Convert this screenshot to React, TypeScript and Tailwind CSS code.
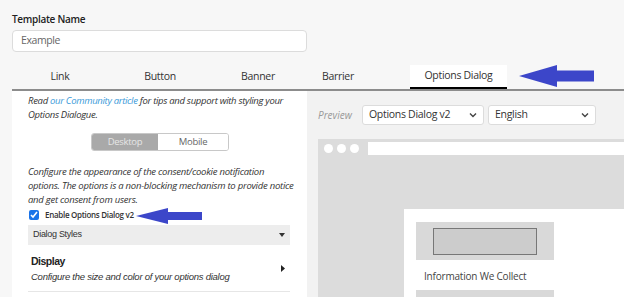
import React from "react";

const OS = { fontFamily: '"Open Sans", "Liberation Sans", sans-serif' };
const AR = { fontFamily: '"Liberation Sans", Arial, sans-serif' };

function Chevron() {
  return (
    <svg width="8" height="6" viewBox="0 0 8 6" className="shrink-0">
      <path d="M1 1.5 L4 4.5 L7 1.5" fill="none" stroke="#444" strokeWidth="1.4" />
    </svg>
  );
}

export default function App() {
  return (
    <div className="w-[624px] h-[297px] overflow-hidden bg-[#f7f7f7] flex flex-col text-[#333]" style={OS}>
      <div className="pl-[12px] pt-[12px]">
        <div className="text-[10px] font-semibold leading-[14px] tracking-[-0.3px] text-[#222]">Template Name</div>
        <div className="mt-[4px] w-[295px] h-[22px] bg-white border border-[#dcdcdc] rounded-[4px] flex items-center pl-[8px] text-[10.5px] tracking-[-0.4px] text-[#666]">
          Example
        </div>
      </div>

      <div className="ml-[12px] mt-[13px] h-[26px] flex items-end border-b-2 border-[#8c8c8c] text-[10.5px] tracking-[-0.3px] text-[#333]">
        <div className="w-[96px] h-[24px] flex items-center justify-center">Link</div>
        <div className="w-[104px] h-[24px] flex items-center justify-center">Button</div>
        <div className="w-[92px] h-[24px] flex items-center justify-center">Banner</div>
        <div className="w-[68px] h-[24px] flex items-center justify-center">Barrier</div>
        <div className="ml-[38px] w-[97px] h-[24px] flex items-center justify-center bg-white border-b-2 border-black">Options Dialog</div>
        <svg width="80" height="24" viewBox="0 0 80 24" className="ml-[10px] mb-[1px]">
          <polygon points="2,12 40,1 40,6.5 77,6.5 77,17.5 40,17.5 40,23" fill="#3c46c9" />
        </svg>
      </div>

      <div className="flex flex-1 min-h-0">
        <div className="ml-[12px] w-[295px] bg-white pl-[16px] pr-[17px] flex flex-col">
          <p className="mt-[3px] mr-[-14px] whitespace-nowrap text-[9.5px] italic leading-[14px] tracking-[-0.3px] text-[#333]">
            Read <span className="text-[#3a9ad9]">our Community article</span> for tips and support with styling your
            <br />
            Options Dialogue.
          </p>
          <div className="mt-[11px] ml-[63px] w-[138px] h-[18px] flex border border-[#c8c8c8] rounded-[3px] overflow-hidden text-[9.5px] tracking-[-0.3px]">
            <div className="w-[66px] bg-[#a9a9a9] text-[#e6e6e6] flex items-center justify-center">Desktop</div>
            <div className="flex-1 bg-white text-[#666] flex items-center justify-center">Mobile</div>
          </div>
          <p className="mt-[14px] mr-[-14px] whitespace-nowrap text-[9.5px] italic leading-[14px] tracking-[-0.25px] text-[#333]">
            Configure the appearance of the consent/cookie notification
            <br />
            options. The options is a non-blocking mechanism to provide notice
            <br />
            and get consent from users.
          </p>
          <div className="h-[16px] flex items-center">
            <input type="checkbox" defaultChecked className="w-[10px] h-[10px] m-0 ml-[1px] accent-[#1a73e8]" />
            <span className="ml-[6px] text-[8px] font-semibold tracking-[-0.3px] text-[#333]">Enable Options Dialog v2</span>
            <svg width="68" height="18" viewBox="0 0 68 18" className="ml-[1px] mt-[1px]">
              <polygon points="1,9 33,1 33,5 67,5 67,13 33,13 33,17" fill="#3c46c9" />
            </svg>
          </div>
          <div className="mt-[2px] h-[20px] bg-[#ededed] flex items-center justify-between pl-[5px] pr-[5px] text-[9px] tracking-[-0.3px] text-[#333]" style={AR}>
            <span>Dialog Styles</span>
            <svg width="6" height="4" viewBox="0 0 6 4"><polygon points="0,0 6,0 3,4" fill="#333" /></svg>
          </div>
          <div className="h-[47px] border-b border-[#e6e6e6] flex items-center justify-between pl-[3px] pr-[5px]" style={AR}>
            <div className="flex flex-col">
              <span className="text-[10.5px] font-bold leading-[16px] tracking-[-0.5px] text-[#222]">Display</span>
              <span className="text-[9.5px] italic leading-[15px] tracking-[-0.25px] text-[#333]">Configure the size and color of your options dialog</span>
            </div>
            <svg width="4" height="7" viewBox="0 0 4 7"><polygon points="0,0 4,3.5 0,7" fill="#222" /></svg>
          </div>
        </div>

        <div className="flex-1 bg-[#f2f2f2] pl-[11px] flex flex-col min-w-0">
          <div className="mt-[14px] h-[20px] flex items-center">
            <span className="text-[10px] italic text-[#999] w-[44px]">Preview</span>
            <div className="w-[122px] h-[20px] bg-white border border-[#dcdcdc] rounded-[3px] flex items-center justify-between pl-[6px] pr-[6px] text-[10.5px] tracking-[-0.3px] text-[#333]">
              <span>Options Dialog v2</span>
              <Chevron />
            </div>
            <div className="ml-[4px] w-[108px] h-[20px] bg-white border border-[#dcdcdc] rounded-[3px] flex items-center justify-between pl-[6px] pr-[6px] text-[10.5px] tracking-[-0.3px] text-[#333]">
              <span>English</span>
              <Chevron />
            </div>
          </div>
          <div className="mt-[14px] flex-1 bg-[#dcdcdc] flex flex-col overflow-hidden">
            <div className="mt-[3px] h-[13px] flex items-center pl-[6px]">
              <div className="w-[9px] h-[9px] rounded-full bg-white" />
              <div className="ml-[4px] w-[9px] h-[9px] rounded-full bg-white" />
              <div className="ml-[4px] w-[9px] h-[9px] rounded-full bg-white" />
              <div className="ml-[9px] flex-1 h-[13px] bg-white" />
            </div>
            <div className="mt-[54px] ml-[86px] flex-1 bg-white pl-[12px] pt-[13px] flex flex-col">
              <div className="w-[138px] h-[38px] bg-[#d9d9d9] flex items-center pl-[17px]">
                <div className="w-[104px] h-[27px] bg-[#cccccc] border border-[#777]" />
              </div>
              <div className="h-[30px] pt-[2px] flex items-center pl-[8px] text-[10px] tracking-[-0.2px] text-[#444]">Information We Collect</div>
              <div className="w-[138px] flex-1 bg-[#d9d9d9]" />
            </div>
          </div>
        </div>
      </div>
    </div>
  );
}
